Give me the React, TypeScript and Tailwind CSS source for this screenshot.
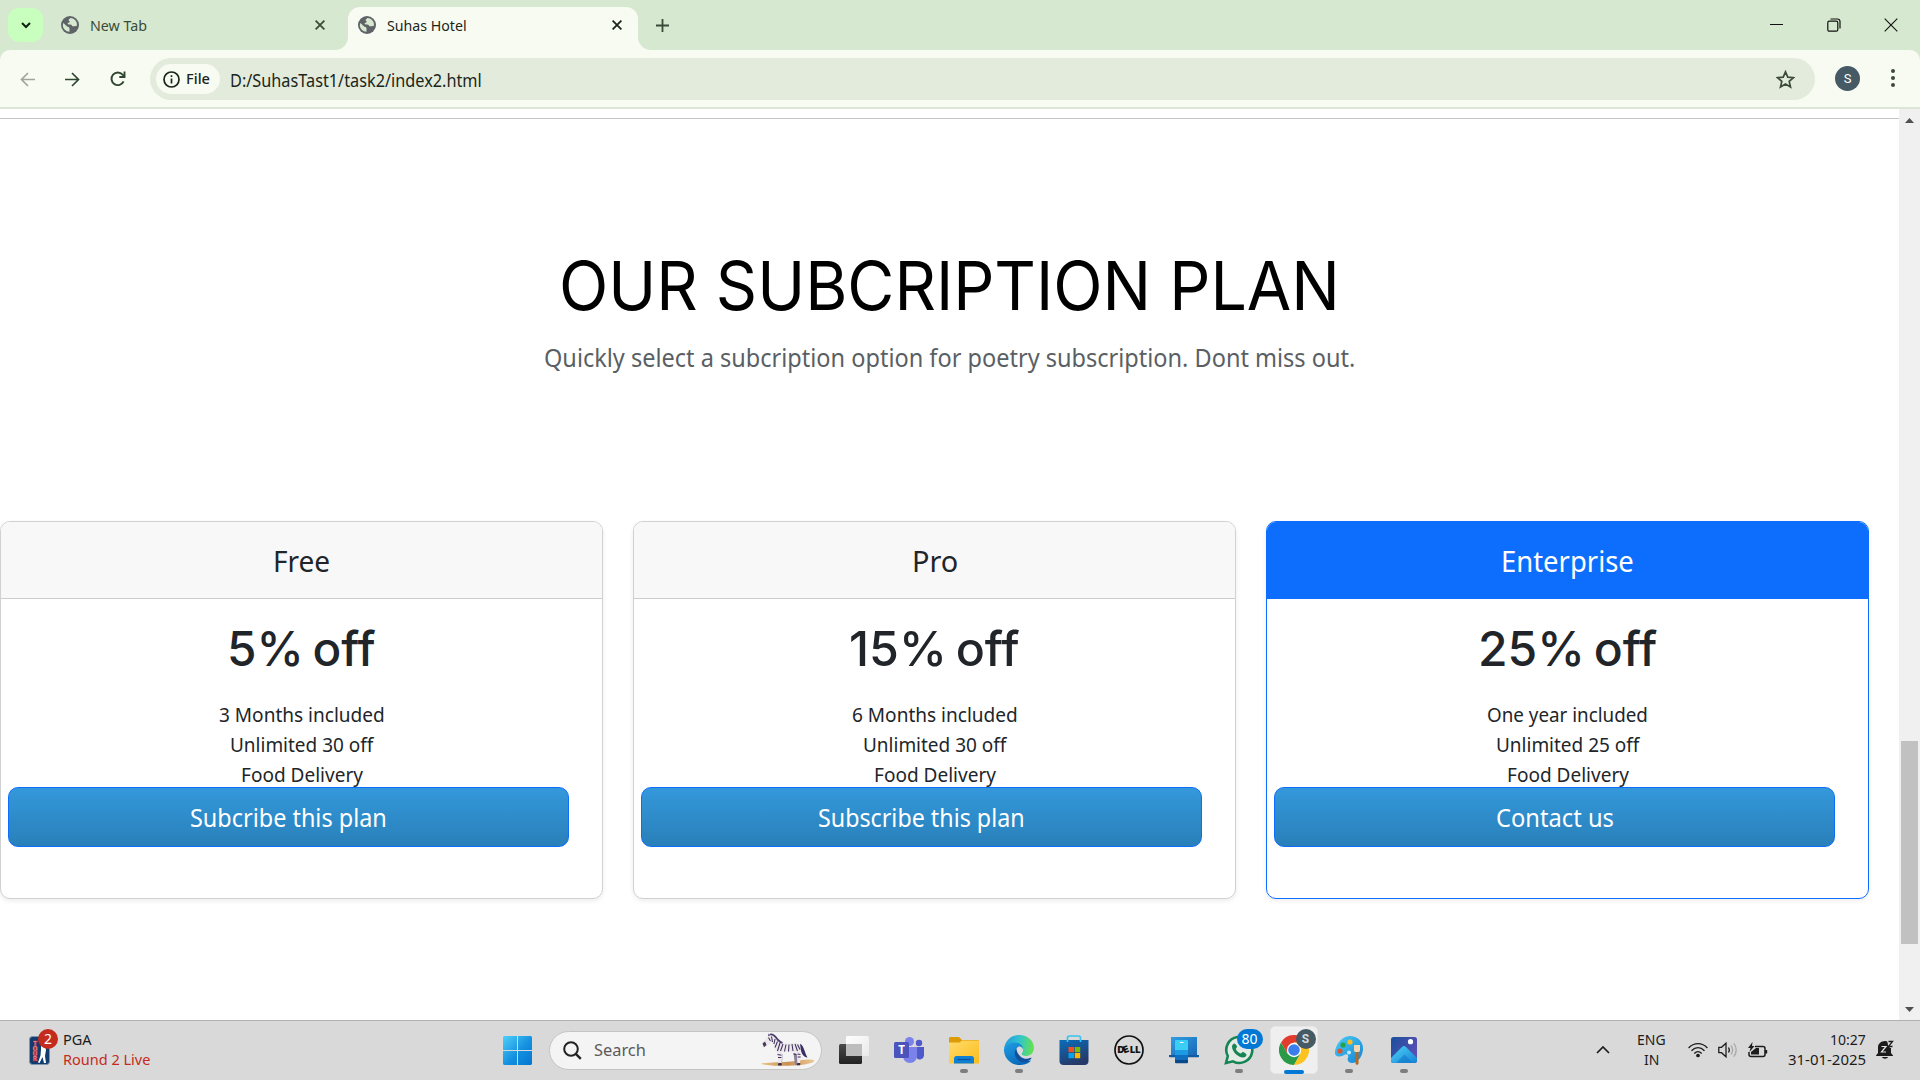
import React, { useLayoutEffect, useRef, useState } from 'react';

type FitProps = { w: number; className?: string; children: string };

/** Single line of text stretched horizontally to an exact width. */
function Fit({ w, className = '', children }: FitProps) {
  const ref = useRef<HTMLSpanElement>(null);
  const [scale, setScale] = useState(1);
  useLayoutEffect(() => {
    if (ref.current) setScale(w / ref.current.offsetWidth);
  }, [w, children]);
  return (
    <span className={`block shrink-0 whitespace-nowrap ${className}`} style={{ width: w }}>
      <span ref={ref} className="inline-block origin-left" style={{ transform: `scaleX(${scale})` }}>
        {children}
      </span>
    </span>
  );
}

const Globe = () => (
  <svg className="size-[18px] shrink-0" viewBox="0 0 18 18">
    <circle cx="9" cy="9" r="9" fill="#5f6368" />
    <path d="M8 2.2C5.5 2.6 3.2 4.4 2.3 7l4.2 3.8c1.3.2 2 .5 2 1.6v3.4c-3.6-.2-6.6-3-6.7-6.8L2.3 7C3.200 4.400 5.500 2.200 8 2.200z" fill="#d6e8cf" />
    <path d="M9.200 2c-.6 1-1.200 1.300-1.700 2 .2.900 1.300 1.200 1.200 2-.3.800-2 .6-2.100 1.600-.1 1 1.500.9 2.900.9 1.300 0 1.300 1.500 2.300 1.800 1 .2 2.300-.5 3.800-.1.500-1.400.4-3.100-.3-4.500-1.100-2.200-3.400-3.600-6.100-3.700z" fill="#d6e8cf" />
  </svg>
);

const Cross = ({ className = '' }: { className?: string }) => (
  <svg className={`size-[10px] shrink-0 ${className}`} viewBox="0 0 10 10" stroke="currentColor" strokeWidth="1.8">
    <path d="M.6.6l8.800 8.800M9.400.6L.6 9.400" />
  </svg>
);

function TabStrip() {
  return (
    <div className="flex h-[50px] items-end bg-[#d6e8cf] text-[14px] leading-[20px] text-[#3b4b38]">
      <div className="flex h-[50px] w-[348px] items-center">
        <div className="ml-2 flex h-[34px] w-[35px] items-center justify-center rounded-[11px] bg-[#c8ffbe]">
          <svg className="size-[12px]" viewBox="0 0 12 12" fill="none" stroke="#10200f" strokeWidth="2">
            <path d="M2 4l4 4 4-4" />
          </svg>
        </div>
        <div className="ml-[18px] flex"><Globe /></div>
        <Fit w={57} className="ml-[11px] pt-px">New Tab</Fit>
        <Cross className="ml-[168px]" />
      </div>
      <div className="relative flex h-[43px] w-[290px] items-center rounded-t-[12px] bg-[#f8fbf2] pb-[7px] pl-[10px] text-[#1b251a]">
        <svg className="absolute bottom-0 -left-[13px] h-[13px] w-[13px]" viewBox="0 0 13 13"><path d="M13 0v13H0A13 13 0 0 0 13 0z" fill="#f8fbf2" /></svg>
        <svg className="absolute bottom-0 -right-[13px] h-[13px] w-[13px]" viewBox="0 0 13 13"><path d="M0 0v13h13A13 13 0 0 1 0 0z" fill="#f8fbf2" /></svg>
        <Globe />
        <Fit w={80} className="ml-[11px] pt-px">Suhas Hotel</Fit>
        <Cross className="ml-[145px]" />
      </div>
      <div className="flex h-[50px] flex-1 items-center pl-[18px]">
        <svg className="size-[13px]" viewBox="0 0 13 13" stroke="#3b4b38" strokeWidth="1.800"><path d="M6.500 0v13M0 6.500h13" /></svg>
        <div className="ml-auto flex items-center gap-[43px] pr-[22px]">
          <svg className="size-[14px]" viewBox="0 0 14 14" stroke="#111"><path d="M0 6.500h13" /></svg>
          <svg className="size-[14px]" viewBox="0 0 14 14" fill="none" stroke="#111" strokeWidth="1.200">
            <rect x=".8" y="3.200" width="10" height="10" rx="1.500" />
            <path d="M3.500 1h7a2.500 2.500 0 0 1 2.500 2.500v7" />
          </svg>
          <svg className="size-[14px]" viewBox="0 0 14 14" stroke="#111" strokeWidth="1.100"><path d="M.7.700l12.600 12.600M13.300.7L.7 13.300" /></svg>
        </div>
      </div>
    </div>
  );
}

function Toolbar() {
  return (
    <div className="bg-[#d6e8cf]">
      <div className="flex h-[59px] items-start rounded-t-[10px] border-b-2 border-[#dde5d7] bg-[#f8fbf2] pt-[8px]">
        <div className="flex h-[42px] w-[150px] items-center pl-[20px] text-[#2f4630]">
          <svg className="size-[15px]" viewBox="0 0 15 15" fill="none" stroke="#9fa69c" strokeWidth="1.700"><path d="M15 7.500H1.500M8 1L1.500 7.500 8 14" /></svg>
          <svg className="ml-[30px] size-[15px]" viewBox="0 0 15 15" fill="none" stroke="currentColor" strokeWidth="1.700"><path d="M0 7.500h13.500M7 1l6.500 6.500L7 14" /></svg>
          <svg className="ml-[30px] size-[16px]" viewBox="0 0 16 16" fill="none" stroke="currentColor" strokeWidth="1.900"><path d="M13.600 10.300A6.300 6.300 0 1 1 12.600 3.700L14.500 5.800" /><path d="M14.500 .5v5.500H9.300" /></svg>
        </div>
        <div className="flex h-[42px] w-[1665px] items-center rounded-full bg-[#e3ecdc] pl-[6px]">
          <div className="flex h-[30px] w-[64px] items-center rounded-full bg-[#f8fbf2] pl-[7px]">
            <svg className="size-[17px] shrink-0" viewBox="0 0 17 17" fill="none" stroke="#1b251a" strokeWidth="1.700"><circle cx="8.500" cy="8.500" r="7.500" /><path d="M8.500 7.500v5M8.500 4.200v1.800" /></svg>
            <Fit w={24} className="ml-[6px] text-[14px] font-medium leading-[20px] text-[#1b251a]">File</Fit>
          </div>
          <Fit w={252} className="ml-[10px] pt-px text-[17.500px] leading-[24px] text-[#1b251a]">D:/SuhasTast1/task2/index2.html</Fit>
          <svg className="ml-auto mr-[20px] size-[19px]" viewBox="0 0 19 19" fill="none" stroke="#3b4b38" strokeWidth="1.700"><path d="M9.500 1.800l2.300 5.300 5.700.5-4.300 3.800 1.300 5.600-5-3-5 3 1.300-5.600L1.500 7.600l5.700-.5z" /></svg>
        </div>
        <div className="ml-[20px] mt-[8px] flex size-[25px] items-center justify-center rounded-full bg-[#455a64] font-['Roboto'] text-[13px] text-white">S</div>
        <div className="ml-[31px] mt-[11px] flex flex-col gap-[3px]">
          <i className="size-[4px] rounded-full bg-[#3b4b38]" />
          <i className="size-[4px] rounded-full bg-[#3b4b38]" />
          <i className="size-[4px] rounded-full bg-[#3b4b38]" />
        </div>
      </div>
    </div>
  );
}

type Plan = {
  name: string; nameW: number; price: string; priceW: number;
  lines: [string, number][]; action: string; actionW: number; featured?: boolean;
};

const plans: Plan[] = [
  { name: 'Free', nameW: 57, price: '5% off', priceW: 149, lines: [['3 Months included', 166], ['Unlimited 30 off', 143], ['Food Delivery', 122]], action: 'Subcribe this plan', actionW: 197 },
  { name: 'Pro', nameW: 46, price: '15% off', priceW: 171, lines: [['6 Months included', 166], ['Unlimited 30 off', 143], ['Food Delivery', 122]], action: 'Subscribe this plan', actionW: 207 },
  { name: 'Enterprise', nameW: 133, price: '25% off', priceW: 179, lines: [['One year included', 161], ['Unlimited 25 off', 143], ['Food Delivery', 122]], action: 'Contact us', actionW: 118, featured: true },
];

function PlanCard({ plan }: { plan: Plan }) {
  return (
    <div className={`h-[378px] w-[603px] shrink-0 overflow-hidden rounded-[10px] border bg-white shadow-[0_2px_5px_rgba(0,0,0,0.075)] ${plan.featured ? 'border-[#0d6efd]' : 'border-[#d0d1d2]'}`}>
      <div className={`flex h-[77px] justify-center border-b pt-[19px] ${plan.featured ? 'border-[#0d6efd] bg-[#0d6efd] text-white' : 'border-[#cbcccd] bg-[#f8f8f8]'}`}>
        <Fit w={plan.nameW} className="text-[29.500px] leading-[40px]">{plan.name}</Fit>
      </div>
      <div className="flex flex-col items-center">
        <Fit w={plan.priceW} className="mt-[20px] font-['Inter'] text-[48px] font-medium leading-[60px] [word-spacing:-4px]">{plan.price}</Fit>
        <div className="mt-[21px] flex h-[87px] flex-col items-center text-[19.500px] leading-[30px]">
          {plan.lines.map(([t, w]) => <Fit key={t} w={w}>{t}</Fit>)}
        </div>
      </div>
      <div className="relative ml-[7px] flex h-[60px] w-[561px] items-center justify-center rounded-[10px] border border-[#0d6efd] bg-linear-to-b from-[#3498db] to-[#2980b9]">
        <Fit w={plan.actionW} className="pt-px text-[24.500px] leading-[38px] text-white">{plan.action}</Fit>
      </div>
    </div>
  );
}

function Page() {
  return (
    <div className="flex h-[911px] bg-white">
      <main className="flex h-[911px] w-[1899px] flex-col overflow-hidden pt-[9px] text-[#212529]">
        <div className="h-px shrink-0 bg-[#c4c6c4]" />
        <div className="flex flex-col items-center pt-[125px]">
          <Fit w={781} className="font-['Inter'] text-[68px] leading-[82px] text-black">OUR SUBCRIPTION PLAN</Fit>
          <Fit w={811} className="mt-[13px] text-[24.500px] leading-[38px] text-[#5a5f64]">Quickly select a subcription option for poetry subscription. Dont miss out.</Fit>
        </div>
        <div className="mt-[144px] flex gap-[30px]">
          {plans.map((p) => <PlanCard key={p.name} plan={p} />)}
        </div>
      </main>
      <div className="flex w-[21px] flex-col items-center bg-[#f0f0f0]">
        <svg className="mt-[9px] h-[5px] w-[9px] shrink-0" viewBox="0 0 9 5"><path d="M0 5l4.500-5L9 5z" fill="#505050" /></svg>
        <div className="mt-[618px] h-[203px] w-[17px] shrink-0 bg-[#c1c1c1]" />
        <svg className="mt-[63px] h-[5px] w-[9px] shrink-0" viewBox="0 0 9 5"><path d="M0 0l4.500 5L9 0z" fill="#505050" /></svg>
      </div>
    </div>
  );
}

const Zebra = () => (
  <svg className="h-[34px] w-[56px]" viewBox="0 0 56 34">
    <defs>
      <linearGradient id="sand" x1="0" x2="1"><stop offset="0" stopColor="#e9c58b" /><stop offset=".5" stopColor="#c98f52" /><stop offset="1" stopColor="#ecc994" /></linearGradient>
    </defs>
    <path d="M1 30.500c8-1.500 22-1 30-2 8-1 18-3 23-1.500 2 2-6 4.500-20 5.500-14 .6-30 .5-33-2z" fill="url(#sand)" />
    <path d="M18.500 19l1.500 13h2l.5-11zM33.500 20l1.500 12h2l1-12z" fill="#8d7f98" />
    <path d="M3 11c-.3-1.500 2-4 4-7C9 1.200 12 .8 14 3.500c2 3 4 5.500 8 6.500 5 1.200 9-.5 14 0 4 .4 5.500 3 5.500 6 0 2.500-1.500 3.500-1 5.500l-.5 9.500h-2.500l-.5-9c-1.500-2-4-3-7-3-3.500.5-5 .5-7.500-.5L21.500 31H18.500L17 19c-2.500-2-3-4-3.500-7L11 9.500C9 12 7 13.500 4.500 14z" fill="#eee8ec" />
    <path d="M40 11c4 1 4 7.500 7.500 13.500-4-.5-5.500-3-6.500-7z" fill="#3c2f63" />
    <path d="M10 1.500c4-1 6 3 7.500 5 2 2 3 2.800 5 3.500" stroke="#4b3e6b" strokeWidth="1.800" fill="none" />
    <path d="M8.500 4.500l2 3.500M11.500 3.500l1 5.500M15 6l-1 5M17.500 8.500l-2.500 6M20 10l-2.500 8M23 11l-2.500 7M26 11.500l-1.500 7M29 11.500l-.5 7M32 11l1 7M35 11l2.500 7M37.500 11.500l2.500 5M17.500 21.500l4 .7M18 24.500h3.500M37.500 21l3 .5M37.700 24h3M33.500 21l3 .5" stroke="#40355f" strokeWidth="1.100" fill="none" />
    <path d="M2.500 10.500l2.500-2 1.500 3.500-2.500 2.200z" fill="#453a58" />
    <path d="M8 3.200l.500-2.700 2 1.700" fill="#57496f" />
    <path d="M18.400 30h3.200v2.500h-3.700zM37.300 30h2.900v2.300h-3.400z" fill="#3a3047" />
  </svg>
);

function Running() {
  return <i className="absolute bottom-[-8px] left-1/2 h-[4px] w-[8px] -translate-x-1/2 rounded-full bg-[#7e7e7e]" />;
}

function PinnedApp({ children, running = false }: { children: React.ReactNode; running?: boolean }) {
  return (
    <div className="flex w-[55px] shrink-0 items-center justify-center">
      <div className="relative flex size-[30px] items-center justify-center">
        {children}
        {running && <Running />}
      </div>
    </div>
  );
}

function PinnedApps() {
  return (
    <div className="flex h-[58px] items-center">
      <PinnedApp>
        <svg className="size-[30px]" viewBox="0 0 30 30">
          <defs><linearGradient id="tv" x2="0" y2="1"><stop stopColor="#4b4b4b" /><stop offset="1" stopColor="#222" /></linearGradient><linearGradient id="tw" x2="1" y2="1"><stop stopColor="#fff" /><stop offset="1" stopColor="#e9e9e9" /></linearGradient></defs>
          <rect y="9" width="23" height="20" rx="1.500" fill="url(#tv)" /><rect x="7" y="1" width="23" height="20" rx="1.500" fill="url(#tw)" /><rect x="7" y="9" width="16" height="12" fill="#bdbdbd" />
        </svg>
      </PinnedApp>
      <PinnedApp>
        <svg className="size-[30px]" viewBox="0 0 30 30">
          <circle cx="25" cy="8" r="3.200" fill="#5059c9" /><circle cx="15.500" cy="6.500" r="4.500" fill="#7b83eb" />
          <path d="M22 12h8v8c0 3-2.500 4.500-4.500 4.500S22 23 22 20z" fill="#5059c9" /><path d="M9 12h14v9c0 4-3 7-7 7s-7-3-7-7z" fill="#7b83eb" />
          <rect y="7" width="15" height="16" rx="1.500" fill="#4b53bc" /><text x="7.500" y="19" textAnchor="middle" fontSize="11.500" fontWeight="700" fontFamily="Noto Sans" fill="#fff">T</text>
        </svg>
      </PinnedApp>
      <PinnedApp running>
        <svg className="size-[30px]" viewBox="0 0 30 30">
          <defs><linearGradient id="fo" x2="1" y2="1"><stop stopColor="#ffdc6b" /><stop offset="1" stopColor="#fbbc1d" /></linearGradient></defs>
          <path d="M0 3.500C0 2.500.7 2 1.500 2H10l3 3h15.500c1 0 1.500.5 1.500 1.500V10H0z" fill="#dc9b07" /><path d="M0 7.500h10.500L13 5.500h17v23H0z" fill="url(#fo)" />
          <path d="M5 28.500v-5c0-1.500 1-2.500 2.500-2.500h15c1.500 0 2.500 1 2.500 2.500v5z" fill="#0f7fd4" /><path d="M8.500 24.500h13" stroke="#07549b" strokeWidth="1.200" />
        </svg>
      </PinnedApp>
      <PinnedApp running>
        <svg className="size-[30px]" viewBox="0 0 30 30">
          <defs>
            <linearGradient id="e1" x1="0" y1=".4" x2="1" y2=".5"><stop stopColor="#2598df" /><stop offset=".5" stopColor="#31c4cd" /><stop offset="1" stopColor="#66e34b" /></linearGradient>
            <linearGradient id="e2" x2=".6" y2="1"><stop stopColor="#1f9fe4" /><stop offset="1" stopColor="#0867b8" /></linearGradient>
          </defs>
          <path d="M0 14C1 6 7 0 15 0c9 0 15 6 15 13 0 5-4 8-8 8-4 0-5-2-4-3 1-1 1-2 1-3 0-4-4-6-8-6-5 0-9 2-11 5z" fill="url(#e1)" />
          <path d="M0 14c2-4 6-6.500 10.500-6.500 5 0 8.500 3 8.500 6.500-1-2-3-3-5-2-4 2-3 10 3 13 3 1.500 7 1 10 .5C24 29 20 30 15 30 7 30-.5 23 0 14z" fill="url(#e2)" />
          <path d="M12.500 13c-4 5-.5 13 6 14 3 .5 6-.5 8.500-3 .7-.8.5-1.700-.5-1.200-3 1.500-7 1.200-9.500-.8-3-2.500-4.500-5-4.500-9z" fill="#124f9f" />
        </svg>
      </PinnedApp>
      <PinnedApp>
        <svg className="size-[30px]" viewBox="0 0 30 30">
          <defs><linearGradient id="st" x2=".4" y2="1"><stop stopColor="#0b6cbb" /><stop offset="1" stopColor="#253a68" /></linearGradient></defs>
          <path d="M8.500 7V3c0-1.200.8-2 2-2h9c1.200 0 2 .8 2 2v4" fill="none" stroke="#39c3f0" strokeWidth="1.700" />
          <path d="M.5 5h29v21c0 2.500-1.500 4-4 4h-21c-2.500 0-4-1.500-4-4z" fill="url(#st)" /><path d="M8.500 5v2M21.500 5v2" stroke="#39c3f0" strokeWidth="1.700" />
          <path fill="#f25022" d="M9.500 12H15v5.200H9.500z" /><path fill="#7fba00" d="M15.800 12h5.400v5.200h-5.400z" /><path fill="#00a4ef" d="M9.500 18H15v5.200H9.500z" /><path fill="#ffb900" d="M15.800 18h5.400v5.200h-5.400z" />
        </svg>
      </PinnedApp>
      <PinnedApp>
        <svg className="size-[30px]" viewBox="0 0 30 30">
          <circle cx="15" cy="15" r="14" fill="none" stroke="#111" strokeWidth="1.700" />
          <text x="15" y="18.400" textAnchor="middle" fontSize="9.500" fontWeight="900" fontFamily="Inter" textLength="23" lengthAdjust="spacingAndGlyphs" fill="#111">D<tspan rotate="-20">E</tspan>LL</text>
        </svg>
      </PinnedApp>
      <PinnedApp>
        <svg className="size-[30px]" viewBox="0 0 30 30">
          <defs><linearGradient id="pl" x2="1" y2="1"><stop stopColor="#2f9ee2" /><stop offset="1" stopColor="#1767b5" /></linearGradient></defs>
          <path d="M2 2h26v18H2z" fill="url(#pl)" /><path d="M0 20h30v1.500c0 .5-.5.800-1 .800H1c-.6 0-1-.3-1-.800z" fill="#0e5aa3" />
          <rect x="6" y="5" width="13" height="23" rx="1.300" fill="#3ccdf4" /><path d="M6 15h13v5H6z" fill="#1d9be2" /><path d="M6 20h13v5H6z" fill="#0f70c2" /><path d="M6 25h13v2.500l-.8.800H6.800L6 27.500z" fill="#094987" /><path d="M11 7.500h3.500" stroke="#fff" />
        </svg>
      </PinnedApp>
      <PinnedApp running>
        <svg className="size-[30px]" viewBox="0 0 30 30">
          <path d="M2 28l1.800-7A13 13 0 1 1 9 26.300z" fill="#e4ebe6" stroke="#168554" strokeWidth="2.600" />
          <path d="M10.500 8.500c-1.200 0-2.500 1.500-2.500 3 0 5 6 11 11 11 1.800 0 3.500-1.300 3.500-3 0-.6-3-2.400-3.700-2.400-.7 0-1.500 1.700-2.200 1.500-2-.7-4-2.600-4.800-4.600-.2-.7 1.300-1.400 1.300-2.200 0-.7-1.600-3.300-2.600-3.300z" fill="#168554" />
        </svg>
        <span className="absolute -top-[6px] left-[13px] flex h-[20px] w-[26px] items-center justify-center rounded-full bg-[#0078d4] text-[14px] leading-none text-white">80</span>
      </PinnedApp>
      <div className="flex w-[55px] shrink-0 items-center justify-center">
        <div className="relative flex size-[48px] items-center justify-center rounded-[5px] border border-[#e6e6e6] bg-[#efefef]">
          <svg className="size-[30px]" viewBox="0 0 30 30">
            <path d="M2 7.500A15 15 0 0 1 28 7.500H15L8.500 18.800z" fill="#e33b2e" />
            <path d="M2 7.500A15 15 0 0 0 15 30l6.500-11.200H8.500z" fill="#2a9a48" /><path d="M28 7.500A15 15 0 0 1 15 30l6.500-11.200L15 7.500z" fill="#fcc31e" />
            <circle cx="15" cy="15" r="7.200" fill="#fff" /><circle cx="15" cy="15" r="5.800" fill="#3b7ded" />
          </svg>
          <span className="absolute top-[2px] left-[25px] flex size-[20px] items-center justify-center rounded-full bg-[#455a64] font-['Roboto'] text-[12px] font-bold leading-none text-[#d5dadd]">S</span>
          <i className="absolute -bottom-px left-[13px] h-[4px] w-[20px] rounded-full bg-[#0078d4]" />
        </div>
      </div>
      <PinnedApp running>
        <svg className="size-[30px]" viewBox="0 0 30 30">
          <defs><linearGradient id="pa" x2="1" y2="1"><stop stopColor="#49cdf5" /><stop offset="1" stopColor="#1583d5" /></linearGradient></defs>
          <path d="M16 1c7 0 13 5 13 12 0 8-5 15-11 15-4 0-5-3-4-5.500 1-2.500-1-4-3-3-3 2-7 3-9.500.5C-1 16 5 1 16 1z" fill="url(#pa)" />
          <circle cx="16" cy="7" r="2.600" fill="#fbbf24" /><circle cx="9" cy="10" r="2.600" fill="#25a244" /><circle cx="6" cy="16" r="2.600" fill="#e0552b" /><circle cx="15" cy="17.500" r="2" fill="#c2ebfa" />
          <path d="M21.500 16h3v13l-1.500 1-1.500-1z" fill="#b06a24" /><path d="M20 10h6v5c0 1.500-1 2-1.500 2h-3c-.8 0-1.500-.5-1.500-2z" fill="#f3d5b0" />
        </svg>
      </PinnedApp>
      <PinnedApp running>
        <svg className="size-[30px]" viewBox="0 0 30 30">
          <defs><linearGradient id="ph" x2="1" y2=".6"><stop stopColor="#1a4f9c" /><stop offset="1" stopColor="#5a4fb5" /></linearGradient><linearGradient id="pm" x2="1" y2="1"><stop stopColor="#4fd3f8" /><stop offset="1" stopColor="#1582d4" /></linearGradient></defs>
          <rect x="2" y="2" width="26" height="26" rx="2.500" fill="url(#ph)" />
          <path d="M2 23l11-11c1.300-1.300 2.700-1.300 4 0l11 11v2.500c0 1.500-1 2.500-2.500 2.500h-21C3 28 2 27 2 25.500z" fill="url(#pm)" /><path d="M7 28l8.500-8.500L24 28z" fill="#1379cc" opacity=".6" /><circle cx="21.500" cy="6.700" r="2.600" fill="#fff" />
        </svg>
      </PinnedApp>
    </div>
  );
}

function Taskbar() {
  return (
    <div className="flex h-[60px] items-center border-t border-[#b0b0b0] bg-[#d9d9d9] pb-px text-[14px] leading-[20px] text-[#1c1c1c]">
      <div className="flex h-full w-[503px] items-center pl-[29px]">
        <div className="relative">
          <svg className="h-[29px] w-[21px]" viewBox="0 0 21 29">
            <rect x=".5" y=".5" width="20" height="28" rx="3" fill="#123c70" stroke="#7f93ab" />
            <text x="6" y="10" textAnchor="middle" fontSize="6" fontWeight="900" fontFamily="Inter" fill="#f6dfe0" stroke="#c9202c" strokeWidth=".6">
              <tspan x="6" y="10">T</tspan><tspan x="6" y="15">O</tspan><tspan x="6" y="20">U</tspan><tspan x="6" y="25">R</tspan>
            </text>
            <path d="M12 9l2 1 2-1 1 5-1 6 1 7h-2l-1.500-6-3 6-1.500-.5 2.500-7 .5-6z" fill="#fff" />
          </svg>
          <span className="absolute -top-[7px] left-[9px] flex size-[20px] items-center justify-center rounded-full bg-[#c42b1c] text-[14px] leading-none text-white">2</span>
        </div>
        <div className="ml-[13px] pb-px">
          <Fit w={29}>PGA</Fit>
          <Fit w={87} className="text-[#c42b1c]">Round 2 Live</Fit>
        </div>
      </div>
      <svg className="size-[29px] shrink-0" viewBox="0 0 29 29">
        <defs><linearGradient id="wn" gradientUnits="userSpaceOnUse" x1="0" y1="0" x2="29" y2="29"><stop stopColor="#4fd0fb" /><stop offset=".55" stopColor="#1490df" /><stop offset="1" stopColor="#0675d0" /></linearGradient></defs>
        <path d="M1 0h13v14H0V1zM15 0h13l1 1v13H15zM0 15h14v14H1l-1-1zM15 15h14v13l-1 1H15z" fill="url(#wn)" />
      </svg>
      <div className="ml-[17px] flex h-[39px] w-[273px] shrink-0 items-center rounded-full border border-[#c4c4c4] bg-[#f4f4f4] pl-[13px]">
        <svg className="size-[19px] shrink-0" viewBox="0 0 19 19" fill="none" stroke="#222" strokeWidth="2"><circle cx="8" cy="8" r="6.800" /><path d="M12.800 12.800l5 5" strokeWidth="2.400" /></svg>
        <Fit w={52} className="ml-[12px] text-[17px] leading-[24px] text-[#5a5a5a]">Search</Fit>
        <div className="ml-auto mr-[5px]"><Zebra /></div>
      </div>
      <div className="ml-[4px]"><PinnedApps /></div>
      <div className="ml-auto flex items-center">
        <svg className="h-[8px] w-[14px]" viewBox="0 0 14 8" fill="none" stroke="#1c1c1c" strokeWidth="1.700"><path d="M1 7l6-6 6 6" /></svg>
        <div className="ml-[27px] flex flex-col items-center"><Fit w={29}>ENG</Fit><Fit w={15}>IN</Fit></div>
        <svg className="ml-[22px] h-[16px] w-[20px]" viewBox="0 0 20 16" fill="none" stroke="#1c1c1c" strokeWidth="1.300">
          <path d="M.6 6C6 .1 14 .1 19.400 6M3.500 8.800c4-4.200 9-4.200 13 0M6.300 11.500c2.300-2.300 5.100-2.300 7.400 0" /><circle cx="10" cy="13.500" r="1.200" fill="#1c1c1c" />
        </svg>
        <svg className="ml-[10px] h-[18px] w-[20px]" viewBox="0 0 20 18" fill="none" stroke="#1c1c1c" strokeWidth="1.300">
          <path d="M.8 6.300h2.700L8 2.200v13.600l-4.500-4.100H.8zM10.500 6.500c1 1.500 1 3.500 0 5" /><path d="M13 4.500c2 2.700 2 6.300 0 9M15.800 2.300c3.200 4 3.200 9.400 0 13.400" stroke="#a9a9a9" />
        </svg>
        <svg className="ml-[10px] h-[17px] w-[20px]" viewBox="0 0 20 17" fill="none" stroke="#1c1c1c" strokeWidth="1.500">
          <path d="M7 4.500h8a2 2 0 0 1 2 2v6a2 2 0 0 1-2 2H3a2 2 0 0 1-2-2V10" /><path d="M18 8v3.500" strokeWidth="2.400" /><path d="M3 12.500V10l5-4h3v6.500z" fill="#1c1c1c" stroke="none" /><path d="M4.500 0L0 6h2.500L1.500 10 6.500 4H4z" fill="#1c1c1c" stroke="none" />
        </svg>
        <div className="ml-[20px] flex w-[78px] flex-col items-end pb-px"><Fit w={36}>10:27</Fit><Fit w={78}>31-01-2025</Fit></div>
        <svg className="ml-[10px] mr-[26px] h-[20px] w-[18px]" viewBox="0 0 18 20">
          <path d="M9 1c4 0 6 3 6 6v6l2 2.500V16H0v-.5L2 13V7c0-3 3-6 7-6zM6 17h6c-.5 2.300-5.500 2.300-6 0z" fill="#1c1c1c" />
          <path d="M5.500 6.500h4.500l-4.500 5.500H10" fill="none" stroke="#e3e3e3" strokeWidth="1.200" /><path d="M11 0h7v8h-4l-2-3z" fill="#d9d9d9" /><path d="M12.500 1.500h4l-4 5h4" fill="none" stroke="#1c1c1c" strokeWidth="1.300" />
        </svg>
      </div>
    </div>
  );
}

export default function App() {
  return (
    <div className="flex h-[1080px] w-[1920px] flex-col overflow-hidden bg-white font-['Noto_Sans',sans-serif]">
      <TabStrip />
      <Toolbar />
      <Page />
      <Taskbar />
    </div>
  );
}
